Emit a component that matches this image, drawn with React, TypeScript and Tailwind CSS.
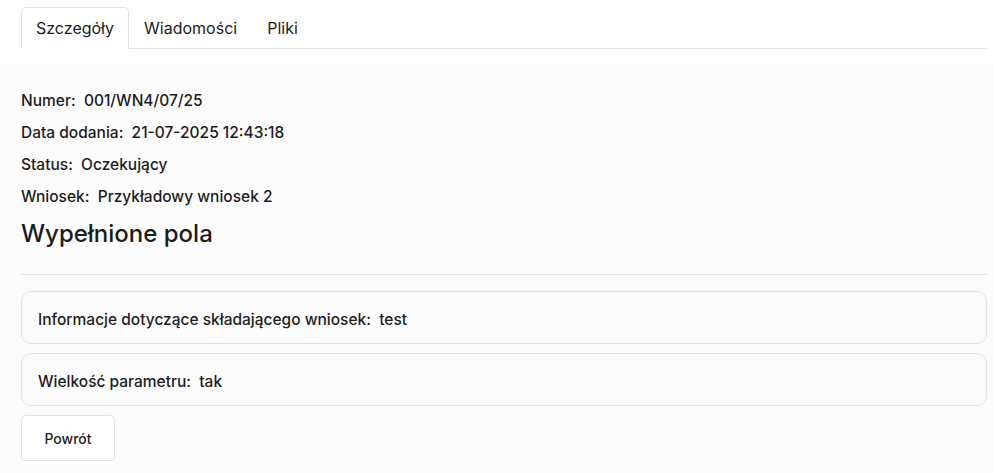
import { useState } from 'react'

const TABS = ['Szczegóły', 'Wiadomości', 'Pliki']

const DETAILS: [string, string][] = [
  ['Numer', '001/WN4/07/25'],
  ['Data dodania', '21-07-2025 12:43:18'],
  ['Status', 'Oczekujący'],
  ['Wniosek', 'Przykładowy wniosek 2'],
]

const FIELDS: [string, string][] = [
  ['Informacje dotyczące składającego wniosek', 'test'],
  ['Wielkość parametru', 'tak'],
]

export default function App() {
  const [tab, setTab] = useState(0)

  return (
    <div className="min-h-screen bg-[#fcfcfc] font-['Inter',sans-serif] text-[#1c1c1c]">
      <div className="bg-white pl-[21px] pr-[7px] pt-[7px] pb-[14px]">
        <ul className="flex border-b border-[#e3e3e3]">
          {TABS.map((name, i) => (
            <li key={name} className="-mb-px">
              <button
                onClick={() => setTab(i)}
                className={`h-[42px] rounded-t-[5px] border px-[14px] text-[16px] ${
                  tab === i ? 'border-[#e3e3e3] border-b-white bg-white' : 'border-transparent'
                }`}
              >
                {name}
              </button>
            </li>
          ))}
        </ul>
      </div>

      <div className="pl-[21px] pr-[7px] pt-[27px]">
        <div className="flex flex-col gap-[10px]">
          {DETAILS.map(([label, value]) => (
            <div key={label} className="h-[22px] text-[15.5px] font-medium leading-[22px]">
              {label}:&nbsp; {value}
            </div>
          ))}
        </div>
        <h2 className="mt-[11px] text-[24px] font-medium leading-[30px]">Wypełnione pola</h2>
        <hr className="mt-[25px] border-[#e3e3e3]" />

        <div className="mt-[16px] flex flex-col gap-[9px]">
          {FIELDS.map(([label, value]) => (
            <div
              key={label}
              className="flex h-[53px] items-center rounded-[10px] border border-[#e3e3e3] bg-[#fcfcfc] px-4 pt-[4px] text-[15.5px] font-medium"
            >
              {label}:&nbsp; {value}
            </div>
          ))}
        </div>

        <button className="mt-[9px] h-[46px] w-[94px] rounded-[4px] border border-[#e3e3e3] bg-white text-[14px] font-medium">
          Powrót
        </button>
      </div>
    </div>
  )
}
